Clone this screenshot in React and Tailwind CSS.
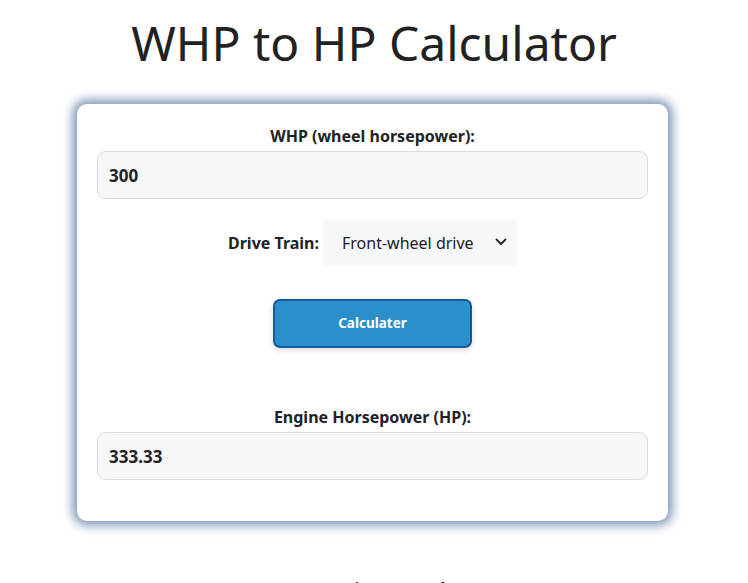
import { useState } from 'react';

const FONT = "font-['Noto_Sans','Open_Sans',sans-serif]";

function Field({ label, value, onChange, readOnly }) {
  return (
    <div className="flex flex-col">
      <label className="text-center text-[16px] font-bold leading-6 text-[#222]">{label}</label>
      <input
        type="text"
        value={value}
        readOnly={readOnly}
        onChange={onChange}
        className="mt-[3px] h-[48px] w-full rounded-[9px] border border-[#d9dadc] bg-[#f6f7f8] px-[11px] text-[17px] font-bold text-[#222] outline-none"
      />
    </div>
  );
}

export default function App() {
  const [whp, setWhp] = useState('300');
  const [drive, setDrive] = useState('fwd');
  const [hp, setHp] = useState('333.33');

  const calculate = () => {
    const loss = { fwd: 0.1, rwd: 0.15, awd: 0.2 }[drive];
    const v = parseFloat(whp);
    if (!isNaN(v)) setHp((v / (1 - loss)).toFixed(2));
  };

  return (
    <div className={`${FONT} min-h-screen bg-white pb-10 text-[#222]`}>
      <h1 className="pt-[8px] text-center text-[48px] font-normal leading-[70px] text-[#222]">
        WHP to HP Calculator
      </h1>
      <div className="ml-[77px] mt-[26px] w-[591px] rounded-[10px] bg-white px-[20px] pb-[41px] pt-[20px] shadow-[0_0_11px_4px_rgba(85,115,160,0.8)]">
        <Field label="WHP (wheel horsepower):" value={whp} onChange={(e) => setWhp(e.target.value)} />

        <div className="mt-[21px] flex items-center justify-center gap-[4px]">
          <span className="text-[16px] font-bold">Drive Train:</span>
          <div className="relative">
            <select
              value={drive}
              onChange={(e) => setDrive(e.target.value)}
              className="h-[45px] w-[194px] appearance-none bg-[#f6f7f8] pl-[19px] pr-[30px] text-[16px] text-[#222] outline-none"
            >
              <option value="fwd">Front-wheel drive</option>
              <option value="rwd">Rear-wheel drive</option>
              <option value="awd">All-wheel drive</option>
            </select>
            <svg className="pointer-events-none absolute right-[10px] top-[18px]" width="12" height="8" viewBox="0 0 12 8" fill="none">
              <path d="M1.5 1.5 6 6l4.5-4.5" stroke="#222" strokeWidth="1.8" strokeLinecap="round" strokeLinejoin="round" />
            </svg>
          </div>
        </div>

        <div className="mt-[34px] flex justify-center">
          <button
            onClick={calculate}
            className="h-[49px] w-[199px] rounded-[7px] border-2 border-[#17599b] bg-[#2b8fcb] text-[13.5px] font-bold text-white shadow-[0_2px_6px_rgba(0,0,0,0.15)]"
          >
            Calculater
          </button>
        </div>

        <div className="mt-[57px]">
          <Field label="Engine Horsepower (HP):" value={hp} readOnly />
        </div>
      </div>

      <h2 className="mt-[54px] text-center text-[32px] font-normal leading-10">How it works</h2>
    </div>
  );
}
